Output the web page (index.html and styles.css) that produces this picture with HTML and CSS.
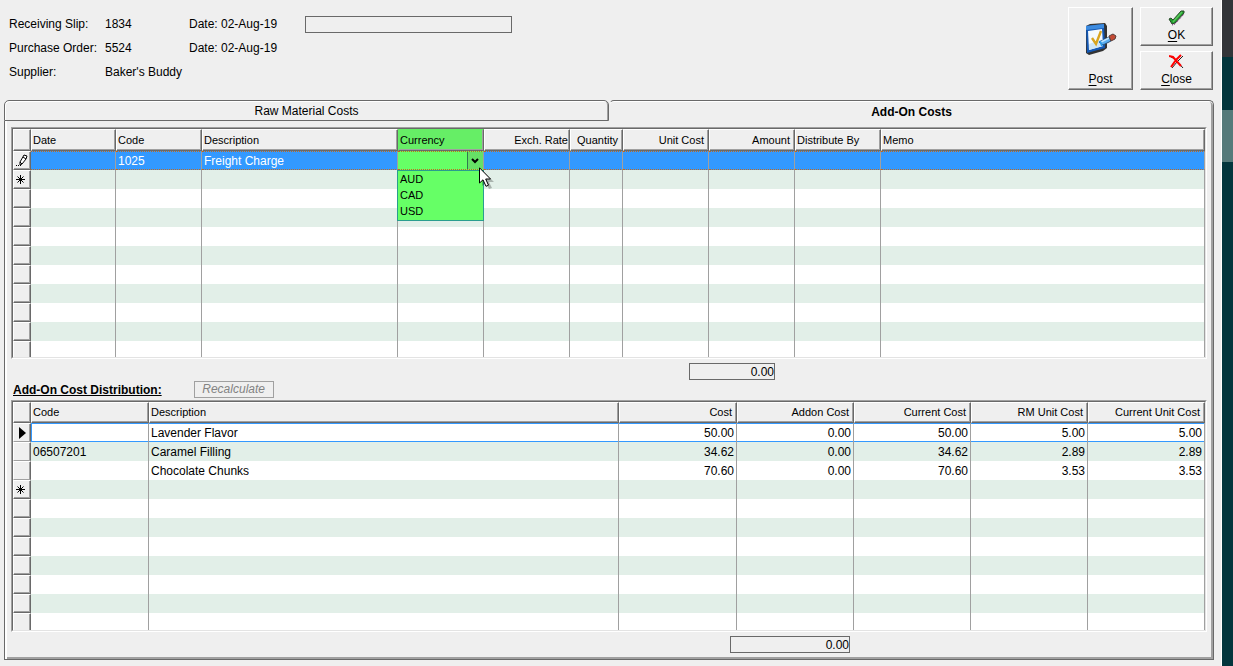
FILE: index.html
```
<!DOCTYPE html>
<html lang="en">
<head>
<meta charset="utf-8">
<title>Receiving Slip</title>
<link rel="stylesheet" href="styles.css">
</head>
<body>
<main class="window">
  <header class="top">
    <div class="info">
      <span>Receiving Slip:</span><span>1834</span><span>Date: 02-Aug-19</span><input class="box" type="text" aria-label="Note" readonly>
      <span>Purchase Order:</span><span>5524</span><span>Date: 02-Aug-19</span><span></span>
      <span>Supplier:</span><span class="wide">Baker's Buddy</span>
    </div>
    <div class="actions">
      <button class="btn post" type="button">
        <svg width="32" height="34" viewBox="0 0 32 34" aria-hidden="true">
          <path d="M1 3 5 1 20 0 22 3 22 25 18 28 4 32 1 30z" fill="#333"/>
          <path d="M1 3 19 1 20 25 2 30z" fill="#1458b4"/>
          <path d="M1 3 19 1 19 5 1 7z" fill="#3c8be0"/>
          <path d="M3 8 17 6 18 23 4 27z" fill="#f4faff"/>
          <path d="M4 21 18 16 18 23 4 27z" fill="#cfe6f8"/>
          <path d="M7 15 11 21 16 8" fill="none" stroke="#d9a521" stroke-width="2.4"/>
          <path d="M14 19 24 14 26 18 18 22z" fill="#5aaef0" stroke="#285078"/>
          <path d="M16 19 24 15" stroke="#bfe4ff" stroke-width="1.5"/>
          <path d="M24 13 28 11 31 13 30 16 26 18z" fill="#c34a34" stroke="#58403c"/>
          <path d="M15 18 17 23" stroke="#2b9ae8" stroke-width="2"/>
        </svg>
        <span><u>P</u>ost</span>
      </button>
      <button class="btn" type="button">
        <svg width="18" height="16" viewBox="0 0 18 16" aria-hidden="true">
          <path d="M1 9 3 8 5 10 13 1 16 1 16 3 7 13 4 14z" fill="#1f9a2c" stroke="#2a4a2a"/>
          <path d="M5 12 14 2" stroke="#58c65a" stroke-width="1.5"/>
          <path d="M4 15 7 14 16 4" fill="none" stroke="#6a1d6a" stroke-dasharray="1 1"/>
        </svg>
        <span><u>O</u>K</span>
      </button>
      <button class="btn" type="button">
        <svg width="15" height="15" viewBox="0 0 15 15" aria-hidden="true">
          <path d="M2 3 6 5 14 14M14 2 8 8 3 14" fill="none" stroke="#222"/>
          <path d="M0 2 4 3 12 12M12 1 7 6 2 13" fill="none" stroke="#f00" stroke-width="2"/>
        </svg>
        <span><u>C</u>lose</span>
      </button>
    </div>
  </header>

  <div class="tabs" role="tablist">
    <button class="tab" type="button" role="tab" aria-selected="false">Raw Material Costs</button>
    <button class="tab active" type="button" role="tab" aria-selected="true">Add-On Costs</button>
  </div>

  <section class="panel">
    <div class="grid">
      <table class="costs">
        <colgroup><col class="c-mark"><col class="c-date"><col class="c-mid"><col class="c-desc"><col class="c-mid"><col class="c-mid"><col class="c-qty"><col class="c-mid"><col class="c-mid"><col class="c-mid"><col></colgroup>
        <thead>
          <tr><th></th><th>Date</th><th>Code</th><th>Description</th><th class="green">Currency</th><th class="num tight">Exch. Rate</th><th class="num">Quantity</th><th class="num">Unit Cost</th><th class="num">Amount</th><th>Distribute By</th><th>Memo</th></tr>
        </thead>
        <tbody>
          <tr class="selected">
            <th><svg width="12" height="13" viewBox="0 0 12 13" aria-hidden="true"><path d="M4 8 8 1 11 2 10 5 6 10 4 11zM4 8 6 10M7 3 10 5" fill="#fff" stroke="#000"/><path d="M0 11.5h1M2 11.5h1M4 11.5h1" stroke="#000"/></svg></th>
            <td></td><td>1025</td><td>Freight Charge</td>
            <td class="picker">
              <select class="currency" aria-label="Currency"><option></option><option>AUD</option><option>CAD</option><option>USD</option></select>
              <svg class="chevron" width="8" height="6" viewBox="0 0 8 6" aria-hidden="true"><path d="M1 1 4 4 7 1" fill="none" stroke="#000" stroke-width="2"/></svg>
              <ul class="menu" role="listbox" aria-label="Currency"><li role="option">AUD</li><li role="option">CAD</li><li role="option">USD</li></ul>
              <svg class="pointer" width="17" height="23" viewBox="0 0 17 23" aria-hidden="true"><path d="M3 3 3 19 7 16 10 22 13 21 10 15 15 15z" fill="#000" opacity=".25"/><path d="M.5.8V16L4 12.8 7 19.3 9.500 18.200 6.700 12H11.500z" fill="#fff" stroke="#000"/></svg>
            </td>
            <td></td><td></td><td></td><td></td><td></td><td></td>
          </tr>
          <tr><th><svg width="9" height="9" viewBox="0 0 9 9" aria-hidden="true"><path d="M4.500 0V9M0 4.500H9M1.500 1.500 7.500 7.500M7.500 1.500 1.500 7.500" stroke="#000"/></svg></th><td></td><td></td><td></td><td></td><td></td><td></td><td></td><td></td><td></td><td></td></tr>
          <tr><th></th><td></td><td></td><td></td><td></td><td></td><td></td><td></td><td></td><td></td><td></td></tr>
          <tr><th></th><td></td><td></td><td></td><td></td><td></td><td></td><td></td><td></td><td></td><td></td></tr>
          <tr><th></th><td></td><td></td><td></td><td></td><td></td><td></td><td></td><td></td><td></td><td></td></tr>
          <tr><th></th><td></td><td></td><td></td><td></td><td></td><td></td><td></td><td></td><td></td><td></td></tr>
          <tr><th></th><td></td><td></td><td></td><td></td><td></td><td></td><td></td><td></td><td></td><td></td></tr>
          <tr><th></th><td></td><td></td><td></td><td></td><td></td><td></td><td></td><td></td><td></td><td></td></tr>
          <tr><th></th><td></td><td></td><td></td><td></td><td></td><td></td><td></td><td></td><td></td><td></td></tr>
          <tr><th></th><td></td><td></td><td></td><td></td><td></td><td></td><td></td><td></td><td></td><td></td></tr>
          <tr class="last"><th></th><td></td><td></td><td></td><td></td><td></td><td></td><td></td><td></td><td></td><td></td></tr>
        </tbody>
      </table>
    </div>
    <div class="total amount-total"><input class="box" type="text" value="0.00" aria-label="Total amount" readonly></div>

    <div class="section-head">
      <h2>Add-On Cost Distribution:</h2>
      <button class="recalc" type="button" disabled>Recalculate</button>
    </div>

    <div class="grid">
      <table class="distribution">
        <colgroup><col class="c-mark"><col class="c-code"><col><col class="c-code"><col class="c-cost"><col class="c-cost"><col class="c-cost"><col class="c-cost"></colgroup>
        <thead>
          <tr><th></th><th>Code</th><th>Description</th><th class="num">Cost</th><th class="num">Addon Cost</th><th class="num">Current Cost</th><th class="num">RM Unit Cost</th><th class="num">Current Unit Cost</th></tr>
        </thead>
        <tbody>
          <tr class="current soft"><th><svg class="marker" width="7" height="12" viewBox="0 0 7 12" aria-hidden="true"><path d="M0 0 7 6 0 12z"/></svg></th><td></td><td>Lavender Flavor</td><td class="num">50.00</td><td class="num">0.00</td><td class="num">50.00</td><td class="num">5.00</td><td class="num">5.00</td></tr>
          <tr class="soft"><th></th><td>06507201</td><td>Caramel Filling</td><td class="num">34.62</td><td class="num">0.00</td><td class="num">34.62</td><td class="num">2.89</td><td class="num">2.89</td></tr>
          <tr class="soft"><th></th><td></td><td>Chocolate Chunks</td><td class="num">70.60</td><td class="num">0.00</td><td class="num">70.60</td><td class="num">3.53</td><td class="num">3.53</td></tr>
          <tr><th><svg width="9" height="9" viewBox="0 0 9 9" aria-hidden="true"><path d="M4.500 0V9M0 4.500H9M1.500 1.500 7.500 7.500M7.500 1.500 1.500 7.500" stroke="#000"/></svg></th><td></td><td></td><td></td><td></td><td></td><td></td><td></td></tr>
          <tr><th></th><td></td><td></td><td></td><td></td><td></td><td></td><td></td></tr>
          <tr><th></th><td></td><td></td><td></td><td></td><td></td><td></td><td></td></tr>
          <tr><th></th><td></td><td></td><td></td><td></td><td></td><td></td><td></td></tr>
          <tr><th></th><td></td><td></td><td></td><td></td><td></td><td></td><td></td></tr>
          <tr><th></th><td></td><td></td><td></td><td></td><td></td><td></td><td></td></tr>
          <tr><th></th><td></td><td></td><td></td><td></td><td></td><td></td><td></td></tr>
          <tr class="last"><th></th><td></td><td></td><td></td><td></td><td></td><td></td><td></td></tr>
        </tbody>
      </table>
    </div>
    <div class="total addon-total"><input class="box" type="text" value="0.00" aria-label="Total addon cost" readonly></div>
  </section>
</main>
<aside class="strip"><div class="strip-head"></div><div class="strip-body"></div><div class="strip-thumb"></div></aside>
</body>
</html>
```
FILE: styles.css
```
* { box-sizing: border-box; }
body {
  margin: 0;
  display: flex;
  min-height: 100vh;
  background: #efefef;
  color: #000;
  font: 12px/15px "Liberation Sans", Arial, sans-serif;
}
button, input, select { font: inherit; color: inherit; margin: 0; }
svg { display: block; }

.window { flex: 1; min-width: 0; border-right: 1px solid #fff; padding: 0 7px 6px 4px; }
.strip { width: 11px; display: flex; flex-direction: column; background: #03363d; }
.strip-head { height: 57px; background: #333539; }
.strip-body { height: 53px; }
.strip-thumb { height: 52px; background: #557a7a; }

.top { display: flex; justify-content: space-between; padding: 7px 1px 10px 5px; }
.info {
  display: grid;
  grid-template-columns: 96px 84px 116px 207px;
  grid-auto-rows: 24px;
  align-items: center;
  padding-top: 5px;
}
.wide { grid-column: span 3; }
.box {
  display: block;
  height: 17px;
  padding: 0;
  border: 1px solid #696969;
  border-radius: 0;
  background: #efefef;
  text-align: right;
}
.actions { display: grid; grid-template-columns: 65px 73px; grid-template-rows: 39px 39px; gap: 5px 7px; }
.btn {
  display: flex;
  flex-direction: column;
  align-items: center;
  justify-content: space-between;
  padding: 2px 0 0;
  border: 1px solid;
  border-color: #fff #696969 #696969 #fff;
  box-shadow: inset -1px -1px #a0a0a0;
  background: #efefef;
}
.btn + .btn svg { flex: none; }
.post { grid-row: span 2; padding: 15px 0 0; }
.btn span { line-height: 19px; }
.btn u { text-underline-offset: 2px; }

.tabs { display: flex; }
.tab {
  flex: 1;
  height: 21px;
  padding: 2px 0 0;
  border: 1px solid #696969;
  border-radius: 5px 5px 0 0;
  box-shadow: inset 1px 1px #fff, inset -1px 0 #a0a0a0;
  background: #efefef;
}
.tab.active {
  border-bottom: 0;
  border-left-color: #efefef;
  box-shadow: inset 0 1px #fff, inset -2px 0 #a0a0a0;
  font-weight: bold;
}
.panel {
  border: 1px solid #696969;
  border-top: 0;
  box-shadow: inset 2px 0 #fff, inset -2px -2px #a0a0a0;
  padding: 6px;
}

.grid { border: 1px solid; border-color: #a0a0a0 #fff #fff #a0a0a0; }
table {
  width: 100%;
  table-layout: fixed;
  border-collapse: separate;
  border-spacing: 0;
  border: 1px solid;
  border-color: #696969 #e3e3e3 #e3e3e3 #696969;
  background: #fff;
}
.c-mark { width: 18px; }
.c-date { width: 85px; }
.c-mid { width: 86px; }
.c-desc { width: 196px; }
.c-qty { width: 53px; }
.c-code { width: 118px; }
.c-cost { width: 117px; }
th {
  border: 1px solid;
  border-color: #fff #696969 #696969 #fff;
  box-shadow: inset -1px -1px #a0a0a0;
  background: #efefef;
  font-weight: normal;
  text-align: left;
}
thead th { height: 22px; padding: 0 4px 0 1px; font-size: 11px; line-height: 13px; white-space: nowrap; }
.distribution thead th { height: 21px; }
th.num, td.num { text-align: right; }
thead th.tight { padding-right: 1px; }
thead th.green { background: #66ee66; border-top-color: #66ee66; border-left-color: #66ee66; }
tbody th { height: 19px; padding: 0 0 0 2px; }
.marker { margin-left: 3px; }
.soft th { border-bottom-color: #a0a0a0; box-shadow: inset -1px 0 #a0a0a0; }
td { height: 19px; padding: 2px 2px 0; border-right: 1px solid #a0a0a0; white-space: nowrap; }
tbody tr:nth-child(even) td { background: #e2efe8; }
.last th { height: 16px; border-bottom: 0; box-shadow: inset -1px 0 #a0a0a0; }
.last td { height: 16px; }
.distribution .last th, .distribution .last td { height: 17px; }
.selected td {
  border-top: 1px dotted #c06a20;
  border-bottom: 1px dotted #c06a20;
  background: #3399ff;
  color: #fff;
}
.current td { box-shadow: inset 0 1px #3399ff, inset 0 -1px #3399ff; }
.current td:nth-child(2) { box-shadow: inset 1px 1px #3399ff, inset 0 -1px #3399ff; }

.selected td.picker { position: relative; padding: 0; background: #66ff66; }
.currency {
  display: block;
  appearance: none;
  width: 100%;
  height: 17px;
  padding: 0;
  border: 0;
  border-radius: 0;
  background: linear-gradient(to right, #2f7a4f 1px, #66e066 1px) right / 16px 100% no-repeat #66ff66;
}
.chevron { position: absolute; right: 4px; top: 6px; pointer-events: none; }
.menu {
  position: absolute;
  z-index: 1;
  left: -1px;
  right: -1px;
  top: 18px;
  margin: 0;
  padding: 0 2px 1px;
  border: 1px solid #2a9d8f;
  background: #66ff66;
  color: #000;
  font-size: 11px;
  line-height: 16px;
  list-style: none;
}
.pointer { position: absolute; z-index: 2; left: 81px; top: 15px; pointer-events: none; }

.total { display: flex; padding-top: 4px; }
.amount-total { padding-left: 678px; }
.amount-total .box { width: 86px; }
.addon-total { padding-left: 719px; }
.addon-total .box { width: 120px; }
.section-head { display: flex; align-items: flex-end; gap: 32px; padding: 1px 0 2px 2px; }
.section-head h2 { margin: 0; font-size: 12px; line-height: 15px; text-decoration: underline; }
.recalc {
  width: 80px;
  height: 17px;
  padding: 0;
  border: 1px solid #a0a0a0;
  background: #efefef;
  color: #838383;
  font-style: italic;
}
```
